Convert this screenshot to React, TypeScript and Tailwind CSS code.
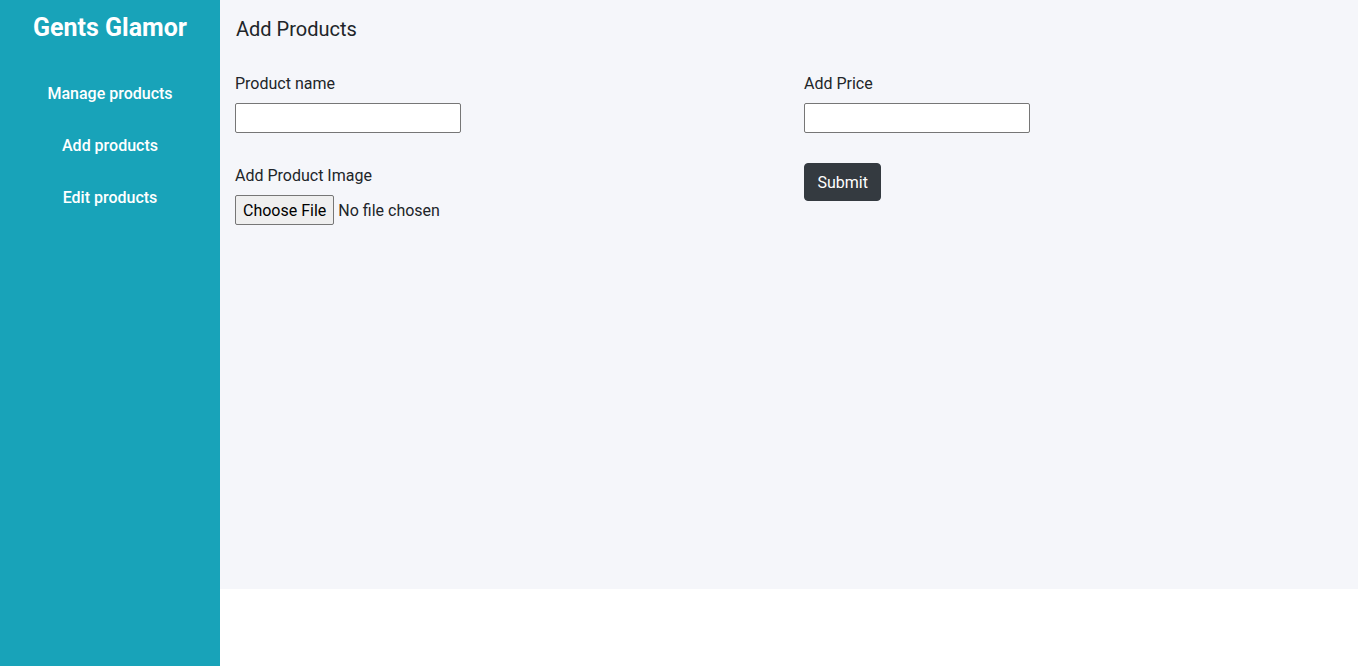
import React from "react";

export default function App() {
  return (
    <div
      className="flex w-[1366px] h-[666px] bg-white text-[#212529]"
      style={{ fontFamily: "Roboto, 'Liberation Sans', sans-serif" }}
    >
      <aside className="w-[220px] h-[666px] bg-[#18a3b9] flex flex-col items-center text-white shrink-0">
        <h1 className="mt-[13px] text-[25px] leading-[30px] font-bold">Gents Glamor</h1>
        <nav className="mt-[39px] flex flex-col items-center gap-[28px] text-[16px] leading-[24px] font-medium">
          <a>Manage products</a>
          <a>Add products</a>
          <a>Edit products</a>
        </nav>
      </aside>
      <main className="w-[1138px] h-[589px] bg-[#f5f6fa]">
        <h2 className="px-[16px] pt-[17px] text-[20px] leading-[24px]">Add Products</h2>
        <div className="grid grid-cols-2 mt-[31px]">
          <div className="px-[15px] flex flex-col items-start">
            <label className="text-[16px] leading-[24px]">Product name</label>
            <input
              type="text"
              className="mt-[7px] w-[226px] h-[30px] bg-white border border-[#767676] rounded-[2px]"
            />
            <label className="mt-[31px] text-[16px] leading-[24px]">Add Product Image</label>
            <input
              type="file"
              className="mt-[7px] h-[30px] text-[16px] leading-[30px] file:h-[30px] file:px-[7px] file:mr-[4px] file:bg-[#efefef] file:border file:border-solid file:border-[#767676] file:rounded-[2px] file:text-black file:text-[16px]"
            />
          </div>
          <div className="px-[15px] flex flex-col items-start">
            <label className="text-[16px] leading-[24px]">Add Price</label>
            <input
              type="text"
              className="mt-[7px] w-[226px] h-[30px] bg-white border border-[#767676] rounded-[2px]"
            />
            <button className="mt-[30px] h-[38px] px-[12.5px] pt-[1px] bg-[#343a40] border border-[#343a40] text-white text-[16px] rounded-[4px]">
              Submit
            </button>
          </div>
        </div>
      </main>
    </div>
  );
}
